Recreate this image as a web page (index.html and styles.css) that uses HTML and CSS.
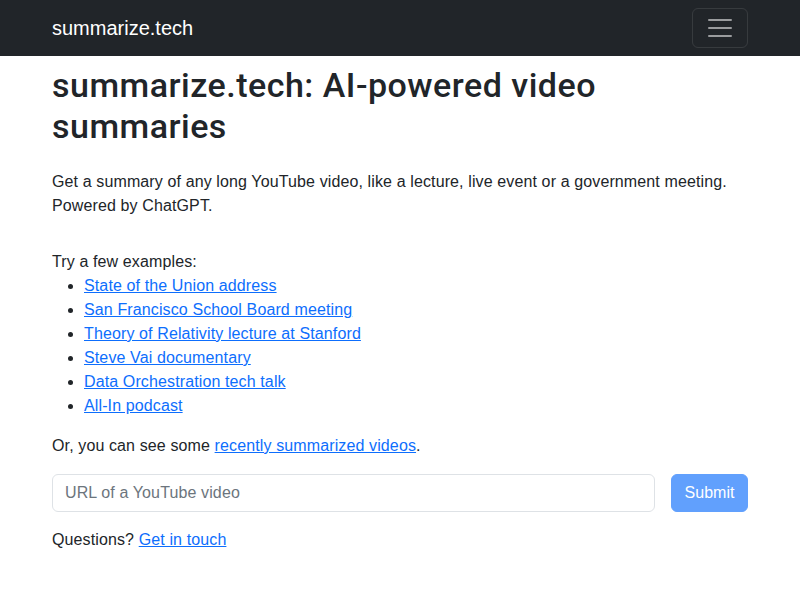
FILE: index.html
```html
<!DOCTYPE html>
<html lang="en">
<head>
<meta charset="utf-8">
<title>summarize.tech</title>
<link rel="stylesheet" href="styles.css">
</head>
<body>
<nav class="navbar">
  <div class="nav-inner">
    <a class="brand" href="#">summarize.tech</a>
    <button class="toggler" type="button" aria-label="Toggle navigation">
      <svg width="30" height="30" viewBox="0 0 30 30" aria-hidden="true">
        <path d="M4 7h22M4 15h22M4 23h22" stroke="rgba(255,255,255,0.55)" stroke-width="2" stroke-linecap="round" stroke-miterlimit="10"/>
      </svg>
    </button>
  </div>
</nav>
<main class="container">
  <h1 class="title">summarize.tech: AI-powered video summaries</h1>
  <p class="lead-text">Get a summary of any long YouTube video, like a lecture, live event or a government meeting. Powered by ChatGPT.</p>
  <div class="examples">
    Try a few examples:
    <ul class="example-list">
      <li><a href="#">State of the Union address</a></li>
      <li><a href="#">San Francisco School Board meeting</a></li>
      <li><a href="#">Theory of Relativity lecture at Stanford</a></li>
      <li><a href="#">Steve Vai documentary</a></li>
      <li><a href="#">Data Orchestration tech talk</a></li>
      <li><a href="#">All-In podcast</a></li>
    </ul>
  </div>
  <p class="para">Or, you can see some <a href="#">recently summarized videos</a>.</p>
  <form class="url-form" onsubmit="return false">
    <input class="url-input" type="text" placeholder="URL of a YouTube video">
    <button class="submit-btn" type="submit" disabled>Submit</button>
  </form>
  <p class="para">Questions? <a href="#">Get in touch</a></p>
</main>
</body>
</html>
```
FILE: styles.css
```css
* { box-sizing: border-box; }
html, body { margin: 0; padding: 0; }
body {
  font-family: "Liberation Sans", Arial, sans-serif;
  font-size: 16px;
  line-height: 1.5;
  letter-spacing: 0.12px;
  color: #212529;
  background: #fff;
}
a { color: #0d6efd; text-decoration: underline; }

.navbar {
  background: #212529;
  height: 56px;
}
.nav-inner {
  width: 720px;
  margin: 0 auto;
  padding: 0 12px;
  height: 56px;
  display: flex;
  align-items: center;
  justify-content: space-between;
}
.brand {
  color: #fff;
  text-decoration: none;
  font-size: 20px;
  line-height: 30px;
  letter-spacing: 0;
}
.toggler {
  width: 56px;
  height: 40px;
  padding: 0;
  background: transparent;
  border: 1px solid rgba(255,255,255,0.1);
  border-radius: 6px;
  display: flex;
  align-items: center;
  justify-content: center;
}
.toggler svg { display: block; }

.container {
  width: 720px;
  margin: 0 auto;
  padding: 8px 12px 0;
}
.title {
  margin: 0 0 23px;
  padding-top: 1px;
  font-family: Roboto, "Liberation Sans", sans-serif;
  font-size: 34px;
  font-weight: 500;
  line-height: 1.2;
  letter-spacing: 0.5px;
}
.lead-text { margin: 0 0 32px; }
.examples { margin-bottom: 16px; }
.example-list {
  margin: 0;
  padding-left: 32px;
}
.para { margin: 0 0 16px; }

.url-form {
  display: flex;
  gap: 16px;
  margin-bottom: 16px;
}
.url-input {
  flex: 1;
  height: 38px;
  padding: 6px 12px;
  font: inherit;
  letter-spacing: 0.12px;
  color: #212529;
  border: 1px solid #dee2e6;
  border-radius: 6px;
  background: #fff;
}
.url-input::placeholder { color: #6c757d; }
.submit-btn {
  height: 38px;
  width: 77px;
  padding: 6px 12px;
  font: inherit;
  letter-spacing: 0;
  color: #fff;
  background: #0d6efd;
  border: 1px solid #0d6efd;
  border-radius: 6px;
  opacity: 0.65;
}
```
